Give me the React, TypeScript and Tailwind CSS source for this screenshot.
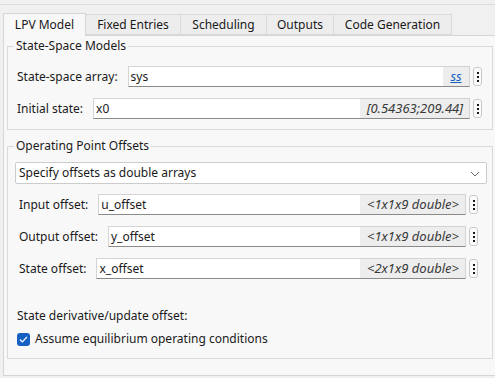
import React from "react";

const tabs = [
  { name: "LPV Model", w: "w-[83px]", active: true },
  { name: "Fixed Entries", w: "w-[95px]" },
  { name: "Scheduling", w: "w-[86px]" },
  { name: "Outputs", w: "w-[67px]" },
  { name: "Code Generation", w: "w-[118px]" },
];

const Kebab = () => (
  <div className="ml-[3px] flex h-[19px] w-[9px] shrink-0 flex-col items-center justify-center gap-[2px] rounded-[3px] border border-[#c9c9c9] bg-[#fbfbfb]">
    <span className="h-[2px] w-[2px] bg-[#1a1a1a]" />
    <span className="h-[2px] w-[2px] bg-[#1a1a1a]" />
    <span className="h-[2px] w-[2px] bg-[#1a1a1a]" />
  </div>
);

type FieldProps = {
  label: string;
  value: string;
  tag?: string;
  link?: string;
};

const Field = ({ label, value, tag, link }: FieldProps) => (
  <div className="flex items-center">
    <span className="shrink-0 whitespace-nowrap">{label}</span>
    <div className="ml-[10px] flex h-[21px] flex-1 items-stretch border border-[#d4d4d4] border-b-[#8a8a8a] bg-white">
      <span className="flex-1 pl-[2px] leading-[19px]">{value}</span>
      {tag && (
        <span className="bg-[#ededed] pl-[7px] pr-[6px] text-[13px] italic leading-[19px] text-[#3a3a3a]">{tag}</span>
      )}
      {link && (
        <span className="w-[26px] bg-[#ededed] text-center text-[13px] italic leading-[19px] text-[#1660c4] underline">
          {link}
        </span>
      )}
    </div>
    <Kebab />
  </div>
);

export default function App() {
  return (
    <div className="h-[378px] w-[495px] overflow-hidden bg-[#f0f0f0] font-['Noto_Sans',sans-serif] text-[12px] leading-[16px] text-[#1a1a1a]">
      <div className="mt-[4px] border-t border-[#dedede]">
        {/* tab strip */}
        <div className="flex items-end pl-[3px] pt-[8px]">
          {tabs.map((t) =>
            t.active ? (
              <div
                key={t.name}
                className={`${t.w} relative z-10 -mb-px flex h-[23px] items-center justify-center border border-b-0 border-[#d6d6d6] bg-[#f8f8f8]`}
              >
                {t.name}
              </div>
            ) : (
              <div
                key={t.name}
                className={`${t.w} flex h-[21px] items-center justify-center border-y border-r border-[#d9d9d9] bg-[#ededed]`}
              >
                {t.name}
              </div>
            )
          )}
        </div>

        {/* tab body */}
        <div className="ml-[3px] h-[341px] w-[500px] border border-[#d6d6d6] bg-[#f8f8f8] pl-[3px]">
          <fieldset className="mt-[2px] w-[486px] border border-[#d9d9d9]">
            <legend className="ml-[6px] px-[2px]">State-Space Models</legend>
            <div className="flex flex-col gap-[11px] pb-[10px] pl-[9px] pr-[10px] pt-[12px]">
              <Field label="State-space array:" value="sys" link="ss" />
              <Field label="Initial state:" value="x0" tag="[0.54363;209.44]" />
            </div>
          </fieldset>

          <fieldset className="mt-[8px] w-[486px] border border-[#d9d9d9]">
            <legend className="ml-[6px] px-[2px]">Operating Point Offsets</legend>
            <div className="pb-[11px] pl-[7px] pr-[5px] pt-[8px]">
              <div className="flex h-[22px] items-center justify-between rounded-[2px] border border-[#cccccc] bg-white pl-[3px] pr-[6px]">
                <span>Specify offsets as double arrays</span>
                <svg width="10" height="6" viewBox="0 0 10 6" className="mt-[1px]">
                  <polyline points="1,1 5,5 9,1" fill="none" stroke="#6b6b6b" strokeWidth="1" />
                </svg>
              </div>
              <div className="mt-[10px] flex flex-col gap-[11px] pl-[4px] pr-[9px]">
                <Field label="Input offset:" value="u_offset" tag="<1x1x9 double>" />
                <Field label="Output offset:" value="y_offset" tag="<1x1x9 double>" />
                <Field label="State offset:" value="x_offset" tag="<2x1x9 double>" />
              </div>
              <div className="mt-[29px] pl-[2px]">State derivative/update offset:</div>
              <label className="mt-[7px] flex items-center gap-[5px] pl-[2px]">
                <span className="flex h-[13px] w-[13px] items-center justify-center rounded-[3px] bg-[#1660c4]">
                  <svg width="9" height="7" viewBox="0 0 9 7">
                    <polyline points="1,3.5 3.3,5.8 8,1" fill="none" stroke="#ffffff" strokeWidth="1.2" />
                  </svg>
                </span>
                <span>Assume equilibrium operating conditions</span>
              </label>
            </div>
          </fieldset>
        </div>
      </div>
    </div>
  );
}
